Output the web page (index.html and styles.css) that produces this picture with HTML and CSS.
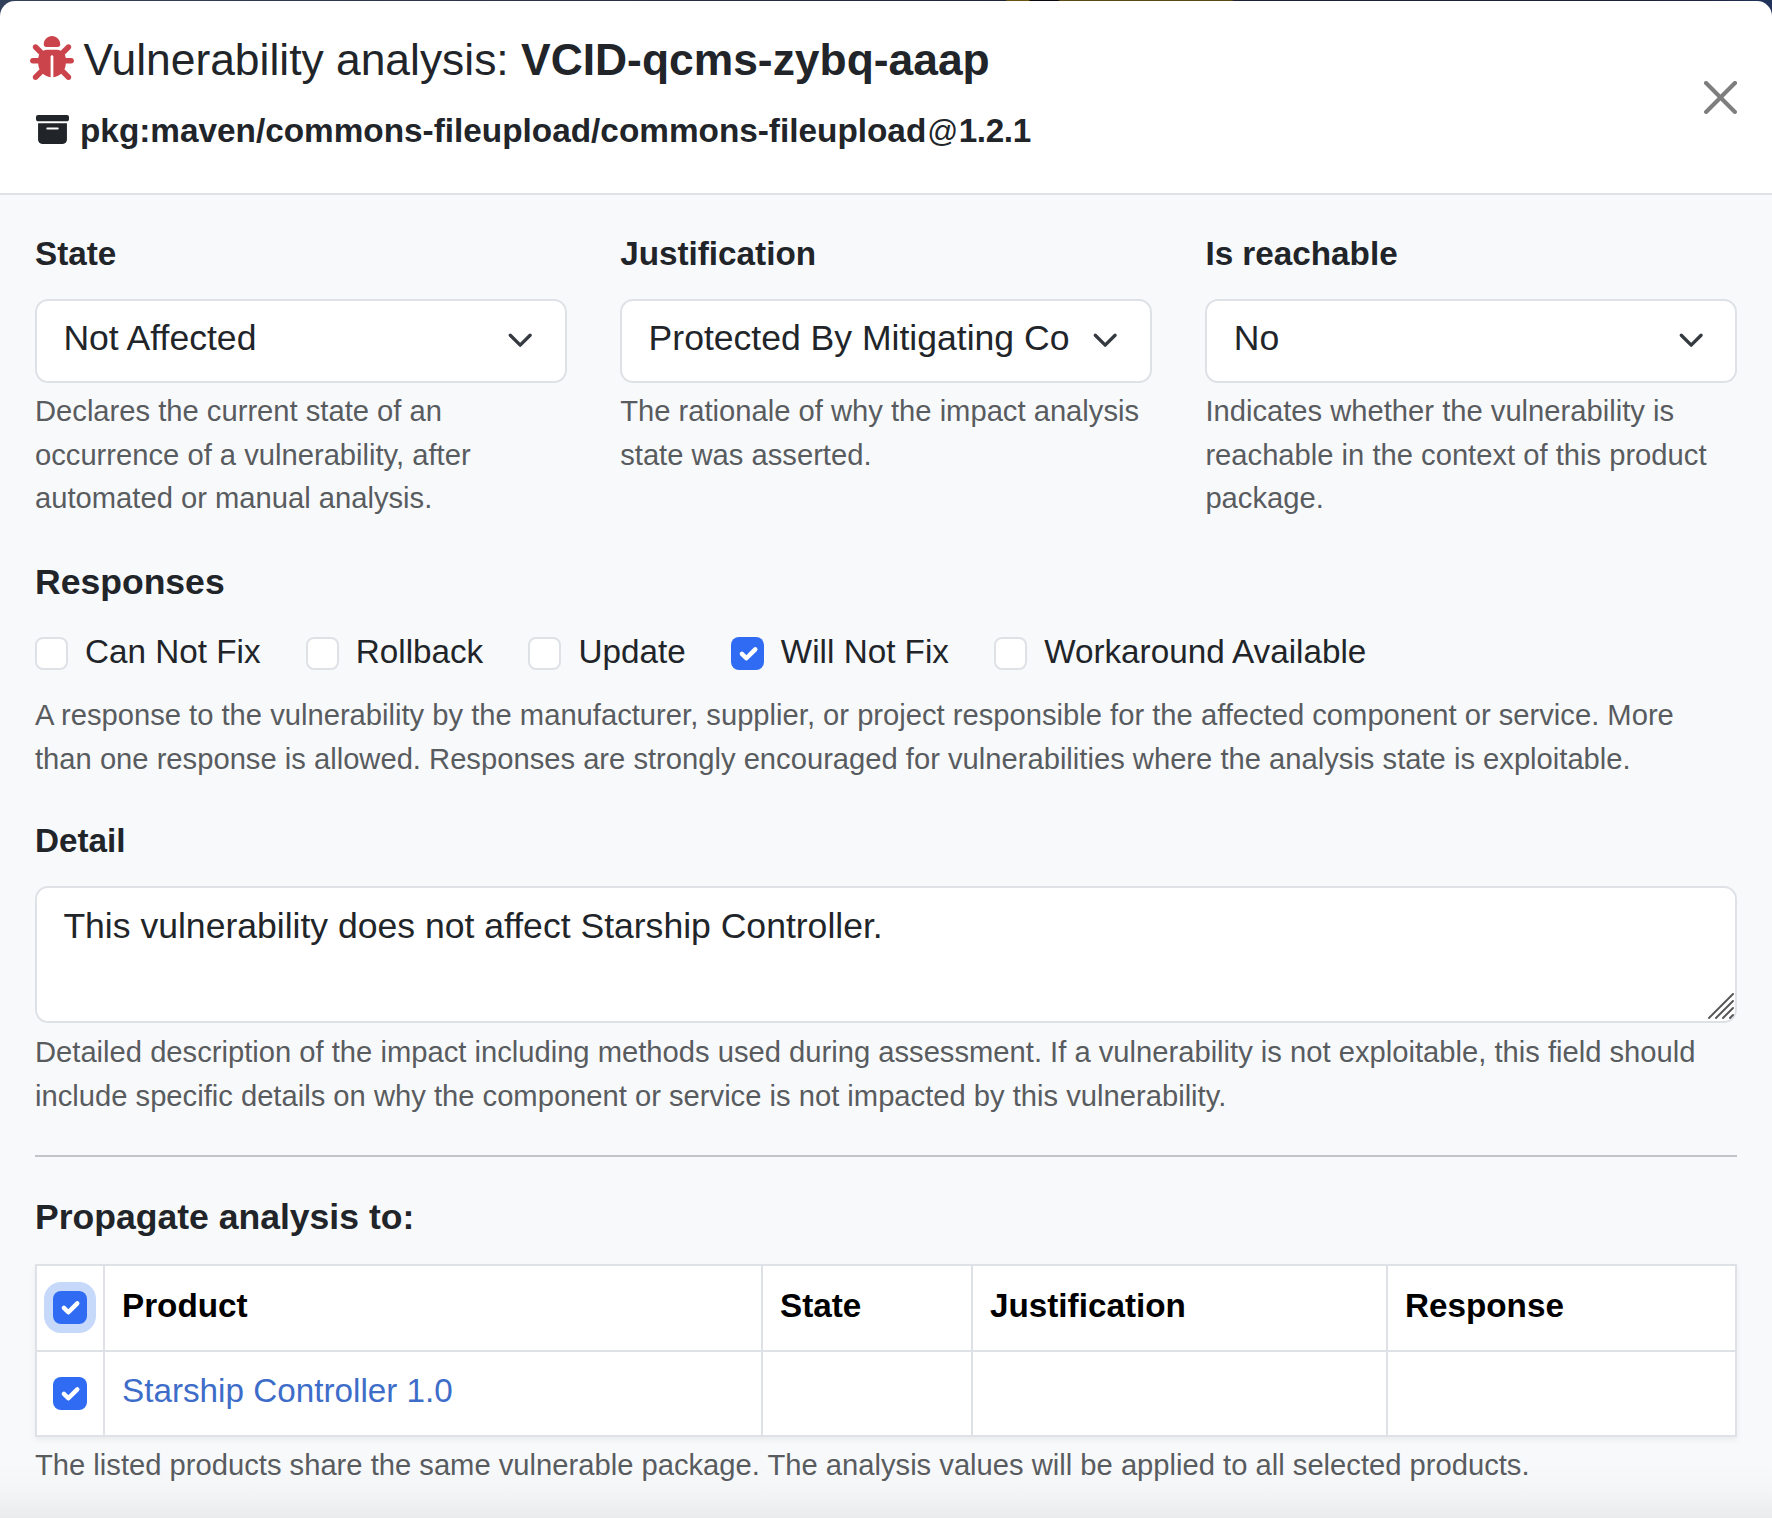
FILE: index.html
```
<!DOCTYPE html>
<html lang="en">
<head>
<meta charset="utf-8">
<title>Vulnerability analysis</title>
<link rel="stylesheet" href="styles.css">
</head>
<body>
<svg class="defs" width="0" height="0" aria-hidden="true">
  <symbol id="chevron" viewBox="0 0 16 16"><path fill="none" stroke="#343a40" stroke-linecap="round" stroke-linejoin="round" stroke-width="2" d="m2 5 6 6 6-6"/></symbol>
  <symbol id="check" viewBox="0 0 20 20"><path fill="none" stroke="#fff" stroke-linecap="round" stroke-linejoin="round" stroke-width="3" d="m6 10 3 3 6-6"/></symbol>
</svg>
<div class="modal">
  <header class="modal-header">
    <div class="headings">
      <h1 class="title">
        <svg class="bug" viewBox="0 0 512 512"><path fill="currentColor" d="M256 0c53 0 96 43 96 96v3.6c0 15.7-12.7 28.4-28.4 28.4H188.4c-15.7 0-28.4-12.7-28.4-28.4V96c0-53 43-96 96-96zM41.4 105.4c12.5-12.5 32.8-12.5 45.3 0l64 64c.7 .7 1.3 1.4 1.9 2.1c14.2-7.3 30.4-11.4 47.5-11.4H312c17.1 0 33.2 4.1 47.5 11.4c.6-.7 1.2-1.4 1.9-2.1l64-64c12.5-12.5 32.8-12.5 45.3 0s12.5 32.8 0 45.3l-64 64c-.7 .7-1.4 1.3-2.1 1.9c6.2 12 10.1 25.3 11.1 39.5H480c17.7 0 32 14.3 32 32s-14.3 32-32 32H416c0 24.6-5.5 47.8-15.4 68.6c2.2 1.3 4.2 2.9 6 4.8l64 64c12.5 12.5 12.5 32.8 0 45.3s-32.8 12.5-45.3 0l-63.1-63.1c-24.5 21.8-55.8 36.2-90.3 39.6V240c0-8.8-7.2-16-16-16s-16 7.2-16 16V479.2c-34.5-3.4-65.8-17.8-90.3-39.6L86.6 502.6c-12.5 12.5-32.8 12.5-45.3 0s-12.5-32.8 0-45.3l64-64c1.9-1.9 3.9-3.4 6-4.8C101.5 367.8 96 344.6 96 320H32c-17.7 0-32-14.3-32-32s14.3-32 32-32H96.3c1.1-14.1 5-27.5 11.1-39.5c-.7-.6-1.4-1.2-2.1-1.9l-64-64c-12.5-12.5-12.5-32.8 0-45.3z"/></svg>
        <span>Vulnerability analysis: <b>VCID-qcms-zybq-aaap</b></span>
      </h1>
      <div class="package">
        <svg class="box" viewBox="0 0 512 512"><path fill="currentColor" d="M32 32H480c17.7 0 32 14.3 32 32V96c0 17.7-14.3 32-32 32H32C14.3 128 0 113.7 0 96V64C0 46.3 14.3 32 32 32zm0 128H480V416c0 35.3-28.7 64-64 64H96c-35.3 0-64-28.7-64-64V160zm128 80c0 8.8 7.2 16 16 16H336c8.8 0 16-7.2 16-16s-7.2-16-16-16H176c-8.8 0-16 7.2-16 16z"/></svg>
        <span>pkg:maven/commons-fileupload/commons-fileupload<span class="at">@</span><span class="version">1.2.1</span></span>
      </div>
    </div>
    <svg class="close" viewBox="0 0 16 16"><path d="M.293.293a1 1 0 0 1 1.414 0L8 6.586 14.293.293a1 1 0 1 1 1.414 1.414L9.414 8l6.293 6.293a1 1 0 0 1-1.414 1.414L8 9.414l-6.293 6.293a1 1 0 0 1-1.414-1.414L6.586 8 .293 1.707a1 1 0 0 1 0-1.414z"/></svg>
  </header>
  <main class="modal-body">
    <div class="columns">
      <div>
        <div class="label">State</div>
        <div class="select"><span>Not Affected</span><svg class="chevron"><use href="#chevron"/></svg></div>
        <p class="help">Declares the current state of an<br>occurrence of a vulnerability, after<br>automated or manual analysis.</p>
      </div>
      <div>
        <div class="label">Justification</div>
        <div class="select"><span>Protected By Mitigating Co</span><svg class="chevron"><use href="#chevron"/></svg></div>
        <p class="help">The rationale of why the impact analysis<br>state was asserted.</p>
      </div>
      <div>
        <div class="label">Is reachable</div>
        <div class="select"><span>No</span><svg class="chevron"><use href="#chevron"/></svg></div>
        <p class="help">Indicates whether the vulnerability is<br>reachable in the context of this product<br>package.</p>
      </div>
    </div>

    <h2 class="heading responses-heading">Responses</h2>
    <div class="checks">
      <div class="option"><span class="checkbox"></span>Can Not Fix</div>
      <div class="option"><span class="checkbox"></span>Rollback</div>
      <div class="option"><span class="checkbox"></span>Update</div>
      <div class="option"><span class="checkbox checked"><svg><use href="#check"/></svg></span>Will Not Fix</div>
      <div class="option"><span class="checkbox"></span>Workaround Available</div>
    </div>
    <p class="help responses-help">A response to the vulnerability by the manufacturer, supplier, or project responsible for the affected component or service. More<br>than one response is allowed. Responses are strongly encouraged for vulnerabilities where the analysis state is exploitable.</p>

    <div class="label detail-label">Detail</div>
    <div class="textarea">
      <span>This vulnerability does not affect Starship Controller.</span>
      <svg class="grip" viewBox="0 0 26 26"><path fill="none" stroke="#555" stroke-width="1.9" stroke-linecap="round" d="M1 25 25 1M8 25 25 8M15 25 25 15M22 25l3-3"/></svg>
    </div>
    <p class="help detail-help">Detailed description of the impact including methods used during assessment. If a vulnerability is not exploitable, this field should<br>include specific details on why the component or service is not impacted by this vulnerability.</p>

    <hr class="rule">

    <h2 class="heading">Propagate analysis to:</h2>
    <table class="products">
      <colgroup><col class="c-check"><col class="c-product"><col class="c-state"><col class="c-just"><col></colgroup>
      <tr>
        <th class="pick"><span class="checkbox checked focus"><svg><use href="#check"/></svg></span></th>
        <th>Product</th><th>State</th><th>Justification</th><th>Response</th>
      </tr>
      <tr>
        <td class="pick"><span class="checkbox checked"><svg><use href="#check"/></svg></span></td>
        <td><a class="link">Starship Controller 1.0</a></td><td></td><td></td><td></td>
      </tr>
    </table>
    <p class="help table-help">The listed products share the same vulnerable package. The analysis values will be applied to all selected products.</p>
  </main>
</div>
</body>
</html>
```
FILE: styles.css
```
* { box-sizing: border-box; }

body {
  margin: 0;
  height: 1518px;
  padding-top: 1px;
  overflow: hidden;
  background: linear-gradient(90deg, #33405a 0, #262a44 760px, #1f2338 1006px, #6b5312 1007px, #6b5312 1029px, #0c0a10 1030px, #0c0a10 1058px, #5c4813 1060px, #5c4813 1232px, #1d2036 1234px, #1d2340 1700px, #22345c 1772px);
  font-family: "Liberation Sans", Arial, sans-serif;
  font-size: 33.25px;
  color: #212529;
}

.defs { display: block; position: absolute; }

h1, h2, p { margin: 0; }

.modal {
  height: 1517px;
  border-radius: 15px 15px 0 0;
  overflow: hidden;
  background: #fff;
}

.modal-header {
  display: flex;
  justify-content: space-between;
  align-items: center;
  height: 194px;
  padding: 0 35px 0 30px;
  border-bottom: 2px solid #dee2e6;
}

.headings { align-self: flex-start; padding-top: 32px; }

.title {
  display: flex;
  gap: 9.5px;
  font-size: 44.4px;
  font-weight: 400;
  line-height: 54px;
  white-space: nowrap;
}

.bug { width: 44px; height: 44px; margin-top: 3px; color: #cc444b; }

.package {
  display: flex;
  gap: 11px;
  margin: 20px 0 0 6px;
  font-size: 33.35px;
  font-weight: 700;
  line-height: 48px;
}

.box { width: 33px; height: 33px; margin-top: 6px; }
.at { margin: 0 .5px 0 1px; font-size: 30.5px; font-weight: 400; }
.version { letter-spacing: -.4px; }
.close { width: 33px; height: 33px; opacity: .5; }

.modal-body {
  height: 1323px;
  padding: 33.6px 35px 0;
  background: linear-gradient(#f8f9fb 0, #f8f9fb 1268px, #f4f5f7 1296px, #eaebed 1323px);
}

.columns { display: grid; grid-template-columns: repeat(3, 1fr); gap: 53.6px; height: 292px; }

.label { font-weight: 700; line-height: 50px; margin-bottom: 20.4px; }

.select {
  display: flex;
  justify-content: space-between;
  height: 84px;
  padding: 11px 31px 0 26.4px;
  border: 2px solid #dee2e6;
  border-radius: 13px;
  background: #fff;
  font-size: 35.55px;
  line-height: 53px;
  white-space: nowrap;
}

.chevron { width: 26.4px; height: 26.4px; margin-top: 15px; flex: none; }

.help {
  margin-top: 7px;
  font-size: 29.18px;
  line-height: 43.6px;
  color: #595c5f;
  white-space: nowrap;
}

.heading { font-size: 35.55px; line-height: 53px; }
.responses-heading { margin-top: 35.6px; }

.checks { display: flex; gap: 45.2px; margin-top: 17.4px; line-height: 50px; }
.option { display: flex; gap: 17px; white-space: nowrap; }

.checkbox {
  display: flex;
  align-items: center;
  justify-content: center;
  width: 33px;
  height: 33px;
  margin-top: 10.4px;
  border: 2px solid #dee2e6;
  border-radius: 8px;
  background: #fff;
}

.checkbox.checked { border: 0; background: #2f6bf3; }
.checkbox.focus { box-shadow: 0 0 0 9px #c6d9fa; }
.checkbox svg { width: 29.7px; height: 29.7px; }

.responses-help { margin-top: 17.4px; }

.detail-label { margin: 35px 0 20px; }

.textarea {
  position: relative;
  height: 137px;
  padding: 11.4px 26.4px;
  border: 2px solid #dee2e6;
  border-radius: 13px;
  background: #fff;
  font-size: 35.55px;
  line-height: 53px;
}

.grip { position: absolute; right: 1px; bottom: 2px; width: 26px; height: 26px; }

.detail-help { margin-top: 7.8px; }

.rule { height: 2px; margin: 36.6px 0 34px; border: 0; background: #c2c4c7; }

.products {
  width: 1702px;
  margin-top: 20.4px;
  table-layout: fixed;
  border-collapse: collapse;
  background: #fff;
  box-shadow: 0 3px 6px rgba(0, 0, 0, .06);
  line-height: 50px;
}

.products tr { height: 85.5px; }
.products th, .products td { padding: 0 17px 4px; border: 2px solid #dee2e6; text-align: left; }
.products th { color: #000; }
.products .pick { padding: 0 0 0 16px; }
.pick .checkbox { width: 34px; margin: 0; }
.c-check { width: 68px; }
.c-product { width: 658px; }
.c-state { width: 210px; }
.c-just { width: 415px; }
.link { color: #3d6dc9; }
.table-help { margin-top: 6.6px; }
```
